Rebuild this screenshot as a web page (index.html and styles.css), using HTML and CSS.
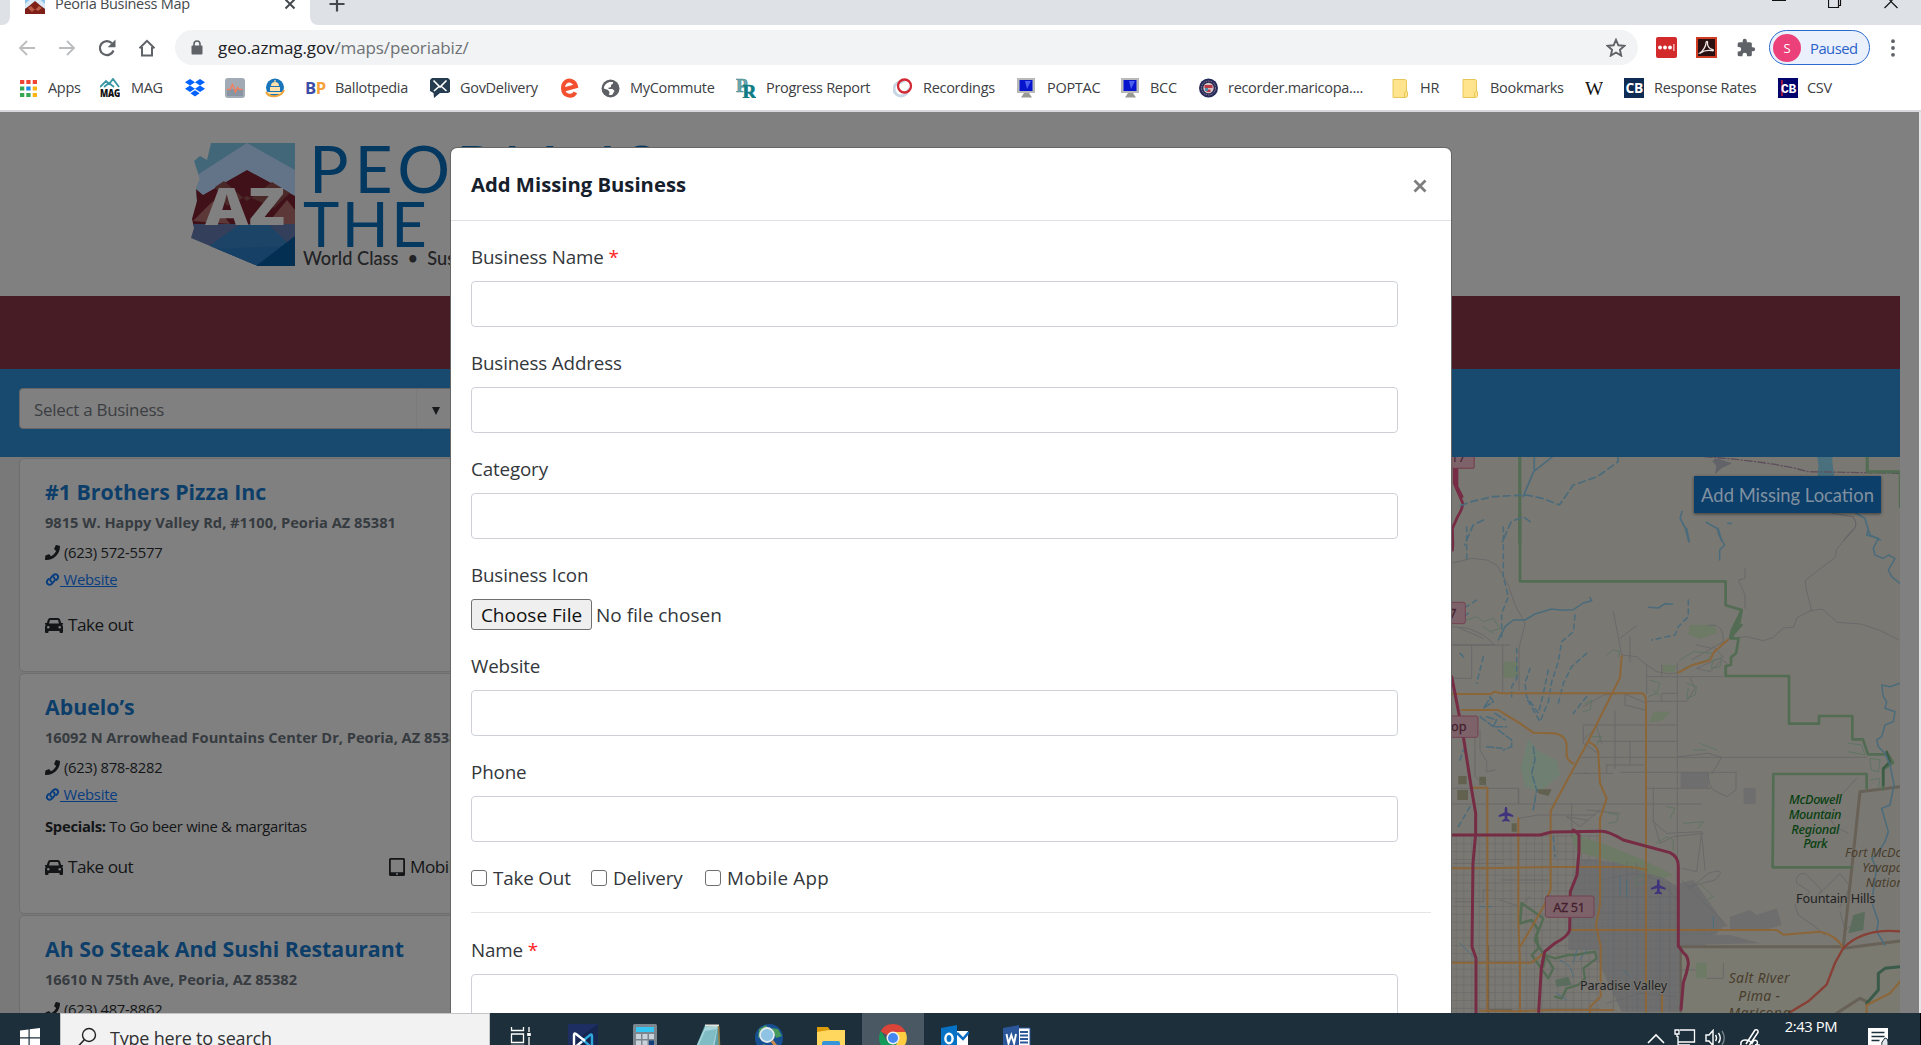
FILE: index.html
```html
<!DOCTYPE html>
<html lang="en">
<head>
<meta charset="utf-8">
<title>Peoria Business Map</title>
<link rel="stylesheet" href="styles.css">
</head>
<body>
<header class="chrome">
  <div class="tabstrip">
    <div class="prev-tab"></div>
    <div class="tab">
      <svg class="favicon" width="20" height="20" viewBox="0 0 20 20"><path fill="#8ec5ea" d="M0 0h20v20H0z"/><path fill="#dbe9f6" d="M0 10 10 1l10 9v4H0z"/><path fill="#7e2018" d="M0 15l4-3 6-5 6 5 4 3v5H0z"/><path fill="#b85c48" d="M3 14l3-2 4 4 4-4 3 2-4 3-3-2-3 3z"/></svg>
      <span class="tab-title">Peoria Business Map</span>
      <svg class="tab-close" width="12" height="12" viewBox="0 0 12 12"><path d="M1.500 1.500l9 9m0-9l-9 9" stroke="#45494d" stroke-width="2"/></svg>
    </div>
    <svg class="newtab" width="16" height="16" viewBox="0 0 16 16"><path d="M8 .5v15M.5 8h15" stroke="#45494d" stroke-width="2.200"/></svg>
    <div class="winbtns">
      <svg width="14" height="10" viewBox="0 0 14 10"><path d="M0 .5h14" stroke="#111"/></svg>
      <svg width="14" height="10" viewBox="0 0 14 10"><path d="M.5-2v9.500h10V-2M12.500-2v7.500h-2" fill="none" stroke="#111" stroke-width="1.200"/></svg>
      <svg width="14" height="10" viewBox="0 0 14 10"><path d="M.5 8L7 1.500 13.500 8M7 1.500L5-1M7 1.500L9-1" fill="none" stroke="#111" stroke-width="1.200"/></svg>
    </div>
  </div>
  <div class="toolbar">
    <div class="nav">
      <svg width="18" height="18" viewBox="0 0 18 18"><path d="M17 9H2M9 2L2 9l7 7" fill="none" stroke="#babcbe" stroke-width="1.800"/></svg>
      <svg width="18" height="18" viewBox="0 0 18 18"><path d="M1 9h15M9 2l7 7-7 7" fill="none" stroke="#babcbe" stroke-width="1.800"/></svg>
      <svg width="18" height="18" viewBox="0 0 18 18"><path d="M15.500 11.500A7 7 0 1 1 14 4.200" fill="none" stroke="#5f6368" stroke-width="2.200"/><path fill="#5f6368" d="M17.500.5v7.800H9.700z"/></svg>
      <svg width="18" height="18" viewBox="0 0 18 18"><path d="M1.500 9.200L9 1.800l7.500 7.400M4 8v8.500h10V8" fill="none" stroke="#5f6368" stroke-width="2"/></svg>
    </div>
    <div class="omnibox">
      <svg class="lock" width="12" height="15" viewBox="0 0 12 15"><path d="M3 6V4a3 3 0 0 1 6 0v2" fill="none" stroke="#5f6368" stroke-width="1.600"/><rect x=".5" y="5.500" width="11" height="9" rx="1" fill="#5f6368"/></svg>
      <span class="url">geo.azmag.gov<i>/maps/peoriabiz/</i></span>
      <svg class="star" width="20" height="19" viewBox="0 0 20 19"><path d="M10 1.800l2.400 5.500 6 .5-4.500 4 1.300 5.800L10 14.500l-5.200 3.100 1.300-5.800-4.500-4 6-.5z" fill="none" stroke="#5f6368" stroke-width="1.900"/></svg>
    </div>
    <div class="exts">
      <svg width="21" height="21" viewBox="0 0 21 21"><rect width="21" height="21" rx="2" fill="#d32b2b"/><g fill="#fff"><circle cx="4" cy="10.500" r="1.900"/><circle cx="9" cy="10.500" r="1.900"/><circle cx="14" cy="10.500" r="1.900"/><path d="M17.400 7h1v7h-1z"/></g></svg>
      <svg width="21" height="21" viewBox="0 0 21 21"><rect x="1" y="1" width="19" height="19" fill="#2a1010" stroke="#cf3a22" stroke-width="2"/><path d="M4 16c3-2 6-7 6-10 0-2 2-2 1.500 0-.5 3 2 6 5 6.500 1.500.5 1 1.500-.5 1.200C12 13 8 13.500 4.500 16z" fill="none" stroke="#efe5e5" stroke-width="1.300"/></svg>
      <svg width="20" height="20" viewBox="0 0 24 24"><path fill="#5f6368" d="M20.500 11H19V7a2 2 0 0 0-2-2h-4V3.500a2.500 2.500 0 0 0-5 0V5H4a2 2 0 0 0-2 2v3.800h1.500a2.700 2.700 0 0 1 0 5.400H2V20a2 2 0 0 0 2 2h3.800v-1.500a2.700 2.700 0 0 1 5.400 0V22H17a2 2 0 0 0 2-2v-4h1.500a2.500 2.500 0 0 0 0-5z"/></svg>
    </div>
    <div class="profile"><span class="avatar">S</span><span>Paused</span></div>
    <svg class="kebab" width="4" height="18" viewBox="0 0 4 18"><g fill="#5f6368"><circle cx="2" cy="2.200" r="1.900"/><circle cx="2" cy="9" r="1.900"/><circle cx="2" cy="15.800" r="1.900"/></g></svg>
  </div>
  <nav class="bookmarks">
    <a><svg width="17" height="17" viewBox="0 0 17 17"><path fill="#ee4535" d="M0 0h4.300v4H0zM6.300 0h4.300v4H6.300zM12.700 0H17v4h-4.300z"/><path fill="#34a853" d="M0 6.500h4.300v4H0zM0 13h4.300v4H0zM6.300 13h4.300v4H6.300z"/><path fill="#1a8be8" d="M6.300 6.500h4.300v4H6.300z"/><path fill="#fbb412" d="M12.700 6.500H17v4h-4.300zM12.700 13H17v4h-4.300z"/></svg></a><span>Apps</span>
    <a><svg width="20" height="20" viewBox="0 0 20 20"><path d="M0 9l6-6 3 3 4-5 6 8M4 9l5-4 5 4" fill="none" stroke="#3d98a6" stroke-width="1.900"/><text x="0" y="19" textLength="20" lengthAdjust="spacingAndGlyphs" font-family="Open Sans" font-weight="800" font-size="10.500" fill="#111">MAG</text></svg></a><span>MAG</span>
    <a><svg width="20" height="18" viewBox="0 0 20 18"><path fill="#0062ff" d="M5 0l5 3.200-5 3.200-5-3.200zM15 0l5 3.200-5 3.200-5-3.200zM5 6.500l5 3.200-5 3.200-5-3.200zM15 6.500l5 3.200-5 3.200-5-3.200zM10 11.200l4.600 3L10 17.500l-4.600-3.300z"/></svg></a>
    <a><svg width="20" height="20" viewBox="0 0 20 20"><rect width="20" height="20" rx="3" fill="#a2aab5"/><rect x="2" y="11" width="16" height="7" fill="#8995a2"/><path d="M2 11.500h3l2.500-5 3 7.500 2-4.500 2 2h3" fill="none" stroke="#f08060" stroke-width="1.500"/></svg></a>
    <a><svg width="20" height="20" viewBox="0 0 20 20"><circle cx="10" cy="9.500" r="9" fill="#1874bb"/><path d="M3 14h14v2H3zM5 9h10v4H5zM6 8a4 4 0 0 1 8 0zM9.400 2h1.200v3H9.400z" fill="#ffe0a8"/><path d="M1 14c3 6 15 6 18-2" fill="none" stroke="#eda43a" stroke-width="2"/></svg></a>
    <a><svg width="21" height="20" viewBox="0 0 21 20"><text y="16" textLength="21" lengthAdjust="spacingAndGlyphs" font-family="Open Sans" font-weight="700" font-size="16" fill="#3b4da5">B<tspan fill="#f6a33a">P</tspan></text></svg></a><span>Ballotpedia</span>
    <a><svg width="20" height="20" viewBox="0 0 20 20"><path fill="#253c50" d="M2 0h16l2 2v12l-2 1H10l-6 5-.5-5L0 13V2z"/><path d="M3.500 2.500L10 9l6.500-6.500M4 13l5-4.500M16.500 13l-5-4.500" stroke="#fff" stroke-width="1.600" fill="none"/></svg></a><span>GovDelivery</span>
    <a><svg width="20" height="20" viewBox="0 0 20 20"><path d="M4 11.500l12-3.300C15 3 9 1 5.500 4S2 15 7 17c4 1.500 7 0 8.500-2.500" fill="none" stroke="#f2502f" stroke-width="4"/></svg></a>
    <a><svg width="19" height="19" viewBox="0 0 19 19"><circle cx="9.500" cy="9.500" r="9" fill="#5d6165"/><path fill="#fff" d="M8.500 3C5 4 3 6.500 2.800 9.500l4.200 1.500 1.500 2-.5 3c3 .5 4-1 4-1.500l1.500-2.500-2-2H8L7 9l3-1V6l2-1.500V3z"/></svg></a><span>MyCommute</span>
    <a><svg width="20" height="20" viewBox="0 0 20 20"><g font-family="Liberation Serif" font-weight="700" font-size="19"><text x="0" y="13.500" fill="#6ba7ac" stroke="#47888e" stroke-width=".6">P</text><text x="6.500" y="19.700" fill="#0e7c85" stroke="#0e7c85" stroke-width=".7">R</text></g></svg></a><span>Progress Report</span>
    <a><svg width="20" height="20" viewBox="0 0 20 20"><circle cx="8" cy="11" r="7" fill="none" stroke="#c8d6e6" stroke-width="3"/><circle cx="11.500" cy="8" r="6.500" fill="none" stroke="#d22734" stroke-width="2.300"/><circle cx="12" cy="8" r="3.800" fill="#fff"/></svg></a><span>Recordings</span>
    <a><svg width="19" height="20" viewBox="0 0 19 20"><path fill="#b9b9b9" d="M0 0h18v15H0z"/><path fill="#0714ce" d="M2.500 2h13v11h-13z"/><path fill="#4a60ee" d="M8 3h6l-4 8z"/><path fill="#999a94" d="M7 15h5l3 4.500H4z"/></svg></a><span>POPTAC</span>
    <a><svg width="19" height="20" viewBox="0 0 19 20"><path fill="#b9b9b9" d="M0 0h18v15H0z"/><path fill="#0714ce" d="M2.500 2h13v11h-13z"/><path fill="#4a60ee" d="M8 3h6l-4 8z"/><path fill="#999a94" d="M7 15h5l3 4.500H4z"/></svg></a><span>BCC</span>
    <a><svg width="20" height="20" viewBox="0 0 20 20"><circle cx="9.500" cy="10" r="9.500" fill="#252a59"/><circle cx="9.500" cy="10" r="7" fill="none" stroke="#9e8897" stroke-width="1" stroke-dasharray="1.500 1"/><circle cx="9.500" cy="10" r="5.200" fill="#d9c5c4"/><path d="M5.500 7h8v3h-8zm2 4.500h4v2.500h-4z" fill="#bb3846"/><path d="M6 10h3v3H6z" fill="#4a8cab"/></svg></a><span>recorder.maricopa....</span>
    <a><svg width="16" height="19" viewBox="0 0 16 19"><path fill="#ffe48d" stroke="#e7c658" d="M1 .5h12q1.500 0 1.500 2V12l1 1v4q-.5 1.500-2 1.500H1z"/><path fill="none" stroke="#e7c658" d="M14.500 12q-3 1-2 6"/></svg></a><span>HR</span>
    <a><svg width="16" height="19" viewBox="0 0 16 19"><path fill="#ffe48d" stroke="#e7c658" d="M1 .5h12q1.500 0 1.500 2V12l1 1v4q-.5 1.500-2 1.500H1z"/><path fill="none" stroke="#e7c658" d="M14.500 12q-3 1-2 6"/></svg></a><span>Bookmarks</span>
    <a><svg width="18" height="18" viewBox="0 0 18 18"><text x="0" y="15.500" textLength="18" lengthAdjust="spacingAndGlyphs" font-family="Liberation Serif" font-size="19" fill="#111">W</text></svg></a>
    <a><svg width="20" height="20" viewBox="0 0 20 20"><path fill="#0f2c54" d="M0 0h20v20H0z"/><text x="1.500" y="15" textLength="17.500" lengthAdjust="spacingAndGlyphs" font-family="Open Sans" font-weight="700" font-size="14" fill="#fff">CB</text></svg></a><span>Response Rates</span>
    <a><svg width="20" height="20" viewBox="0 0 20 20"><path fill="#03036e" d="M0 0h20v20H0z"/><path d="M4 2v16" stroke="#d61f30" stroke-width="1.500"/><text x="3" y="15" textLength="15" font-family="Liberation Mono" font-weight="700" font-size="13" fill="#fff">CB</text></svg></a><span>CSV</span>
  </nav>
</header>

<main class="page">
  <div class="banner">
    <svg class="logo" width="105" height="123" viewBox="0 0 105 123">
      <defs><clipPath id="az"><path d="M20 0H104V123H67L0 95l3-10-2-9 5-18-1-12 4-10-6-18 6-5 7 4z"/></clipPath></defs>
      <g clip-path="url(#az)"><path fill="#426778" d="M0 0h104v60H0z"/><path fill="#647488" d="M0 36L56 0l48 27v32H0z"/><path fill="#401119" d="M0 42l12 10 44-25 48 26v30H0z"/><path fill="#4a2928" d="M24 44l9-6 23 20 25-19 18 11-16 15-27-12-20 10z"/><path fill="#5d3838" d="M2 78l20-20 17 23zM76 81l20-24 8 10v14z"/><path fill="#343f5b" d="M0 81h104v42H0z"/><path fill="#1b4466" d="M18 103L48 82h30l26 25v16H60z"/><path fill="#174066" d="M25 106l40 17 30-20z"/><path fill="#032f52" d="M104 93v30H65z"/></g>
      <text x="14" y="81.500" textLength="80" lengthAdjust="spacingAndGlyphs" font-family="Open Sans" font-size="52" font-weight="800" fill="#808080">AZ</text>
    </svg>
    <div class="wordmark"><b>PEORIA IS</b><b class="the">THE</b><span>World Class&nbsp; •&nbsp; Sus</span></div>
  </div>
  <div class="maroon"></div>
  <div class="searchbar"><div class="select"><span>Select a Business</span><i></i></div></div>
  <div class="content">
    <section class="list">
      <article class="card">
        <h2>#1 Brothers Pizza Inc</h2>
        <h3>9815 W. Happy Valley Rd, #1100, Peoria AZ 85381</h3>
        <p><svg class="ph" viewBox="0 0 512 512"><use href="#phone"/></svg>(623) 572-5577</p>
        <p class="web"><svg class="ph" viewBox="0 0 512 512"><use href="#link"/></svg><u>&nbsp;Website</u></p>
        <div class="services"><span><svg class="car" viewBox="0 0 18 15"><use href="#car"/></svg>Take out</span></div>
      </article>
      <article class="card tall">
        <h2>Abuelo’s</h2>
        <h3>16092 N Arrowhead Fountains Center Dr, Peoria, AZ 85382</h3>
        <p><svg class="ph" viewBox="0 0 512 512"><use href="#phone"/></svg>(623) 878-8282</p>
        <p class="web"><svg class="ph" viewBox="0 0 512 512"><use href="#link"/></svg><u>&nbsp;Website</u></p>
        <p class="specials"><b>Specials:</b> To Go beer wine &amp; margaritas</p>
        <div class="services"><span><svg class="car" viewBox="0 0 18 15"><use href="#car"/></svg>Take out</span><span><svg class="tablet" viewBox="0 0 16 18"><path fill="#131517" fill-rule="evenodd" d="M1.500 0h13Q16 0 16 1.500v15Q16 18 14.500 18h-13Q0 18 0 16.500v-15Q0 0 1.500 0zM1.800 1.800v12.400h12.400V1.800zM7 15.300v1.400h2v-1.400z"/></svg>Mobile App</span></div>
      </article>
      <article class="card">
        <h2>Ah So Steak And Sushi Restaurant</h2>
        <h3>16610 N 75th Ave, Peoria, AZ 85382</h3>
        <p><svg class="ph" viewBox="0 0 512 512"><use href="#phone"/></svg>(623) 487-8862</p>
      </article>
    </section>
    <section class="map">
      <svg width="449" height="556" viewBox="1451 457 449 556">
        <defs>
          <symbol id="phone" viewBox="0 0 512 512"><path fill="#131517" d="M493.400 24.600l-104-24c-11.300-2.600-22.900 3.300-27.500 13.900l-48 112c-4.200 9.800-1.400 21.300 6.900 28l60.600 49.600c-36 76.700-98.900 140.500-177.200 177.200l-49.600-60.600c-6.800-8.300-18.200-11.100-28-6.900l-112 48C3.900 466.600-2 478.100.600 489.400l24 104C27.100 504.200 36.700 512 48 512c256.100 0 464-207.500 464-464 0-11.200-7.700-20.900-18.600-23.400z"/></symbol>
          <symbol id="link" viewBox="0 0 512 512"><g fill="none" stroke="#083d80" stroke-width="66" stroke-linecap="round"><path d="M215 330c-45-35-50-95-10-138l85-90c90-75 205 30 135 130l-40 42"/><path d="M297 182c45 35 50 95 10 138l-85 90c-90 75-205-30-135-130l40-42"/></g></symbol>
          <symbol id="car" viewBox="0 0 18 15"><path fill="#131517" fill-rule="evenodd" d="M5 0h8q1.500 0 2 1.500L16.200 5H18v1.500h-1Q18 7.500 18 9v5q0 1-1 1h-1.500q-1 0-1-1v-1h-11v1q0 1-1 1H1q-1 0-1-1V9q0-1.500 1-2.500H0V5h1.800L3 1.500Q3.500 0 5 0zM5 2L4 5.500h10L13 2zM3.300 8A1.200 1.200 0 1 0 3.300 10.600 1.200 1.200 0 1 0 3.300 8zM14.700 8A1.200 1.200 0 1 0 14.700 10.600 1.200 1.200 0 1 0 14.700 8z"/></symbol>
          <pattern id="grid" width="47" height="47" patternUnits="userSpaceOnUse"><path d="M0 1h47M1 0v47M0 25h47M24 0v47" stroke="#66666a" stroke-width="1.800" fill="none"/></pattern>
          <pattern id="dense" width="18" height="22" patternUnits="userSpaceOnUse"><path fill="#6e6e6e" d="M0 0h18v22H0z"/><path d="M0 1h18M1 0v22" stroke="#66676a" stroke-width="1.200" fill="none"/></pattern>
          <symbol id="plane" viewBox="0 0 46 46"><path fill="#40337e" d="M23 0q4 1 4 8v9l18 9v5l-18-4v9l7 5v4l-11-2-11 2v-4l7-5v-9L1 31v-5l18-9V8q0-7 4-8z"/></symbol>
        </defs>
        <path fill="#7a7872" d="M1451 457h449v556h-449z"/>
        <g transform="translate(1440 530) scale(.33333)" fill="none" stroke-linejoin="round" stroke-linecap="round">
          <path fill="#7a7a70" d="M715 1252h500l165-20v220H715z"/>
          <path fill="#6f8072" stroke="none" d="M265 625l25 35 60 30 10 45-60 50-45-15-12-60z"/>
          <path fill="url(#grid)" d="M30 915h450v540H30z"/>
          <path fill="url(#dense)" d="M410 985l200 20 110 70 60 5 70 110-60 60h-70v195H545l-70-150V1260h-90v-80z"/>
          <path fill="#6e6e6e" d="M720 1060l40-10 100 140-145 10zM870 1160l60-20 20 15 60-20 15 50-50 15H870zM720 1215h150l90 25-240 5zM722 727h84v46h-84zM911 774h36v48h-36z"/>
          <path fill="#6c7a66" d="M190 395h44v48h-44zM390 910l110 35 110 45 90 45-30 10-150-50-110-30zM768 1298h32v46h-32zM640 545h50l-20 25-42 8zM750 285h75l5 25-50 17-35-15zM668 405h40l-5 22h-35z"/>
          <path fill="#4f6a56" opacity=".7" d="M1240 1155l35-10-5 55-45 10zM345 1350l40-10 10 25-45 5z"/>
          <path fill="#62604f" d="M55 738h25v25H55zM52 780h32v30H52zM118 740h20v25h-20zM215 880h15v25h-15zM290 778h45l-10 20-30-8z"/>
          <!-- minor roads -->
          <g stroke="#66676a" stroke-width="2.600">
            <path d="M35 100l60-15 45 5 30 15 35 60 20 60 30 55-18 75v125M35 290l50 5 45 20 35 30H35M35 345h175M188 345v140M95 345v100H35M60 295l70 30M35 775h200v45M35 822h750M120 600v60l20 35v30l25 -5M105 620v120l40 35M235 865l60-10h170M236 775v45"/>
            <path d="M520 245l15 75 10 55 45 5 30 25 30 20 35 7 35-5M540 325l50-38M570 320v75M620 405v85M712 400v845M620 440h230M665 405v35M620 514h120l25-40-15-30M665 514v-24h45M525 545v170M430 585h280M470 634h240M425 682h855M500 705h112M570 635v70M500 705v25M430 730h90M540 727h350M620 775h190M640 775v100l40 35 105-5-15 120-45-10M395 730h50"/>
            <path d="M805 730q0 35 15 50l40 20 28-20v-52M845 682l-30 50M715 680l90-10 40 12M430 590v50l45 30M430 630l40-40 15 50M430 530l60-35 60-5 70 30M555 490v35l60 15M440 840l100 10M440 870l-60-10 40 30 60-50M395 820v100"/>
            <path d="M915 115v30l-20 5 20 45v40M870 325l50-5 50 12 30-10 30-28 30-2 12-30 40-20 35-5 45 40 70 5 60 20 55 28M1115 243l-15-60-5-30 30-25 60-45 5-25 45-55"/>
            <path d="M755 390l60-35 35-20q0-60-45-48M770 345l45 10M860 430v-30l-20-15M820 350l30 30-80 35 40 10 30-30M1115 1120l30-40-50-50q-30 0-25 30l40 25-45 40 10 30 50 35 30 25M1200 1130l30-60-30-40-60 60M1200 1145l15 55 30-20M1160 830l40-30 50-55M1155 840l30 50 40 20"/>
            <path d="M725 1050l80 80 60 60M745 1080l60-50q60-20 20 20l-80 20M785 910l10 110M640 870l20 70 40-20 90-10M150 1080h-20v35H45M40 1000h150M185 1050h140M180 1110l60 20 30-30M480 1050l100-20 80 20 50 60M480 1100h230M480 1150h230M520 1000v440M560 1000v440M590 1000v440M660 1040v400M690 1060v380M720 1320h45M800 1345h50v-45M500 1420l100-30 110 10"/>
          </g>
          <path d="M145 1250v200M145 1440h70" stroke="#655f4e" stroke-width="5"/>
          <!-- reservations -->
          <path d="M720 1250h490l50-465 120-15M1210 1255l170-22M1190 1450l70-45 20 10" stroke="#686157" stroke-width="9"/>
          <path d="M722 1250v195" stroke="#655f58" stroke-width="7"/>
          <!-- park boundaries -->
          <g stroke="#536c54">
            <path d="M240-50V154h617v72l48 14-30 83" stroke-width="8"/>
            <path d="M905 240l-8 45-25 40h24l-8 45-15 12v22l-16 5v29h190v143h90v-23h100v70h32l15 45h60l15 25-30 20v60" stroke-width="8"/>
            <path d="M1280 775v-43H1000l-2 280h235" stroke-width="8"/>
            <path d="M905 240l-30 60-5 25 35-40" stroke-width="7"/>
            <path d="M245 1120l65 45-20 50 5 40-20 20 50 70 15-30-25-40 30 10 40-10 20 0 60-10 5 20-40 30 5 30-20 20-35 10-15 30-20-5" stroke-width="7"/>
            <path d="M245 1120l-5 60 35-10 20 30-10 30 30 50-5 30" stroke-width="8"/>
            <path d="M1380 1310l-45 5-20 15v50l-35 40" stroke="#3a5a4a" stroke-width="9"/>
            <path d="M1340 665l10 30-20 20v50" stroke="#3b5c44" stroke-width="7"/>
          </g>
          <g fill="none" stroke="#5f7464" stroke-width="3"><path d="M80 270l30-10 20 15 30-10 20 30-30 10M130 290l30 20M500 375l20-15 20 5-5 15M630 450l30 10-10 30-25 10M640 480l20 20M740 460l30 10-5 25-25 10 5-30M720 390l40-25 60 5-20 20-70 25M820 390l25-5-5 25-25 5zM435 520l20-10-5 30-20 5M455 620l30 0-15 25M505 850l30 5-5 20-25 5M680 830l25 5-15 30M730 880l60-5-15 20M1225 640l40 5 10 30-50-10M1290 685l30 5-5 35-20-5zM1290 750l30-5-5 30M650 940l30-20 20 10 0 30M760 660l40 0M780 640l50 20M590 1040l20-5v25l-20 5zM780 1060l40 40-20 10"/></g>
          <!-- waterways -->
          <g stroke="#4a6c7c" stroke-width="4.500">
            <path d="M175 330l20-40 25-20 35 0 30-18 50-15 30 4 35-2 30-20 25-7-5-10M625 232l30 2 20-13 22 2M740-5l8 40M832-5l5 20 17 30-15 15v30M1285 0l-5 15 35 10-15 30 5 20 25 10 15-10 20 10-20 35 10 20 25 20M1380 460l-30 10-25-5 5 35 10 15-5 20 30 10-5 30-25 10-10 35-15 10 5 20 20 20 15 35 12 60-12 60-25 10 20 70-10 30-25 40-15 10 15 30-15 100 20 60-5 30 25 40"/>
            <g stroke-dasharray="15 12"><path d="M80-10v100M190-10v150l15 60-20 50v70M405 255l-5 50-35 30-10 60-20 60-10 60-25 60-40-70M440 370l-45 40-25 50-15 60M325 420l-15 70-15 60-35-50-5-40 15-45M230 355v90l-15 25v30M60 370l15 15M60 690l10-30M110 210l-30 20M85 250l-45 30M130 380l-20 80M440 500l-40 50M745 210v50l-30 30-10 25-70 15M340 920l5 60M90 830l-35 60"/></g>
            <path d="M280 650l5 40-10 40 15 50-10 60M150 500l10 15-30 20 20-30M140 560l30 10-10 20 40 0M165 550l30 20M120 560l40 30M175 600l40 30v20l-25 10M140 650l45 5" stroke-dasharray="22 8"/>
          </g>
          <path d="M540 1040v60M560 1050v50M360 1290l30 20 10 30M410 1260l-10 40M440 1260l-20 30M350 1390l30 20M550 1320l20 20M60 1240l50 50M120 1130h40M820 1160v40" stroke="#486e84" stroke-width="3" stroke-dasharray="15 5"/>
          <!-- main roads -->
          <g stroke="#8c6638" stroke-width="6">
            <path d="M35 492h118l10-7 20 5h420q15 0 15 25v930M65 540h110l65 40 40 28 60 2q40 5 40 40v30q5 15 20 20M545 378l-5 65-95 190-113 210v235l-20 50-70 120M445 635q30 15 30 35l5 90 20 45-20 60v260l-12 60 14 65v150l-32 30v50M95 773h47v670M235 865v310l5 125v145M35 1015h100l200-4h240l45 8M390 1200h620l20 14 110-9q50 10 70 50M35 1298h240l40-30M120 1442l110 2 100-4h190M666 1395v50M715 428l40-22 55-15 12-25 42-37M1380 1355l-30 35-40 20-30 15v25"/>
          </g>
          <path d="M1380 1204q-110-10-170 50l-25 45-25 65-55 50-55 33" stroke="#883f35" stroke-width="7"/>
          <!-- freeways -->
          <g stroke="#762c44" stroke-width="9">
            <path d="M35 0q5 30 2 60M35 440l10 50 25 130 25 160 12 70v60l-8 90-3 250 12 35v170M35 915h265l35-9 150-2q20 0 65 26l140 38q25 12 25 40v240l15 20q15 10 15 35-5 30-15 55l-7 80M400 900l17 15v50l-6 70-20 50-2 115q-5 20-45 40l-30 25-10 50-8 130"/>
          </g>
          <use href="#plane" x="175" y="830" width="46" height="46"/><use href="#plane" x="632" y="1048" width="46" height="46"/>
          <g fill="#7e626a" stroke="#733b4d" stroke-width="2.500"><rect x="-10" y="217" width="86" height="64" rx="6"/><rect x="-30" y="558" width="144" height="64" rx="6"/><rect x="316" y="1098" width="146" height="64" rx="6"/></g>
          <g font-family="Noto Sans" stroke="none" font-size="38">
            <g fill="#43202d" stroke="#43202d" stroke-width=".8"><text x="28" y="263">7</text><text x="33" y="603">op</text><text x="340" y="1145" textLength="95">AZ 51</text></g>
            <g fill="#094012" font-style="italic" font-weight="500" text-anchor="middle"><text x="1126" y="821" textLength="158">McDowell</text><text x="1125" y="866" textLength="158">Mountain</text><text x="1126" y="911" textLength="144">Regional</text><text x="1126" y="955" textLength="73">Park</text></g>
            <g fill="#493d2d" font-style="italic"><text x="1215" y="980">Fort McDowell</text><text x="1267" y="1025">Yavapai</text><text x="1277" y="1070">Nation</text></g>
            <g fill="#493d2d" font-style="italic" font-size="42"><text x="866" y="1358" textLength="183">Salt River</text><text x="895" y="1412" textLength="125">Pima -</text><text x="865" y="1463" textLength="186">Maricopa</text></g>
            <g fill="#212224" stroke="#7a7872" stroke-width="5" paint-order="stroke"><text x="1068" y="1118" textLength="238">Fountain Hills</text><text x="420" y="1380" textLength="262">Paradise Valley</text></g>
          </g>
        </g>
        <g transform="translate(1380 110) scale(.34506 .33333)" fill="none" stroke-linecap="round">
          <path fill="#626269" d="M975 1045l45 15-30 15-20 18 5-25-12-15z"/><path fill="#4a6f7d" d="M1267 1038h44v20l5 40h-48l3-30z"/>
          <path d="M940 1040q200 15 300 45l270 5" stroke="#5d4f5c" stroke-width="4" stroke-dasharray="22 7 3 7"/>
          <path d="M405 1040v260M1412 1035v50h100M1508 1090v100" stroke="#536c54" stroke-width="9"/>
          <path d="M215 1070v50l25 60q0 15-15 40l-15 35v50M223 1075v55l15 30" stroke="#762c44" stroke-width="8"/>
          <g stroke="#4a6c7c" stroke-width="5"><path d="M500 1040l-55 45-30 75M447 1040v40M875 1205l-5 20 15 30 10 40M945 1237l35 20 10 35M1380 1210l25 15 15 50 30 15"/><path d="M690 1040v15l-60 45-70 25-40 60-50-20-45-10-100 5-60 15-40 15M300 1230l-30 15-25 60M435 1235l-20-15-35 15-25 60M1008 1240h10" stroke-dasharray="20 12"/></g>
          <path d="M1310 1210l60 10q15 20 5 35l-30 35" stroke="#626368" stroke-width="3"/>
          <rect x="190" y="1020" width="83" height="55" rx="5" fill="#7e626a" stroke="#733b4d" stroke-width="3"/><text x="206" y="1056" font-family="Noto Sans" font-size="36" fill="#43202d">17</text>
        </g>
      </svg>
      <div class="addbtn">Add Missing Location</div>
    </section>
  </div>
  <div class="edge"></div>

  <section class="modal">
    <div class="modal-head"><h1>Add Missing Business</h1><svg width="14" height="14" viewBox="0 0 14 14"><path d="M1.500 1.500l11 11m0-11l-11 11" stroke="#7d7d7d" stroke-width="2.800"/></svg></div>
    <div class="modal-body">
      <label>Business Name <em>*</em></label><div class="input"></div>
      <label>Business Address</label><div class="input"></div>
      <label>Category</label><div class="input"></div>
      <label>Business Icon</label><div class="file"><span class="filebtn">Choose File</span><span>No file chosen</span></div>
      <label>Website</label><div class="input"></div>
      <label>Phone</label><div class="input"></div>
      <div class="checks"><i></i><span>Take Out</span><i></i><span>Delivery</span><i></i><span>Mobile App</span></div>
      <hr>
      <label>Name <em>*</em></label><div class="input"></div>
    </div>
  </section>
</main>

<footer class="taskbar">
  <div class="start"><svg width="20" height="20" viewBox="0 0 20 20"><path fill="#fff" d="M0 2.600L8.500 1.500V9.300H0zM9.700 1.300L20 0v9.300H9.700zM0 10.500h8.500v8L0 17.400zM9.700 10.500H20V20L9.700 18.600z"/></svg></div>
  <div class="search"><svg width="20" height="22" viewBox="0 0 20 22"><circle cx="12" cy="8" r="6.500" fill="none" stroke="#222" stroke-width="1.400"/><path d="M7.500 12.500L1 19.500" stroke="#222" stroke-width="1.600"/></svg><span>Type here to search</span></div>
  <div class="apps">
    <div><svg width="22" height="22" viewBox="0 0 22 22"><g fill="none" stroke="#fff" stroke-width="1.300"><path d="M1.500 0v3.500h12V0M1.500 7h12v8.500h-12zM1.500 22v-3.500h12V22M19 0v5M19 10v12"/></g><path fill="#fff" d="M17.200 6h3.600v3h-3.600z"/></svg></div>
    <div class="up"><svg width="30" height="30" viewBox="0 0 30 30"><path fill="#16264f" d="M0 0h30v30H0z"/><path fill="#1d2f62" d="M0 0h30L0 22z"/><path d="M14 17.500l8-6.500q2-1.500 2 1v9q0 2-2 1l-7-6" fill="none" stroke="#2da7dc" stroke-width="2.400"/><path d="M17 17L8 10q-2-1.500-2 1v10q0 2.500 2 1.500l6-5" fill="none" stroke="#fff" stroke-width="2.400"/></svg></div>
    <div class="up"><svg width="24" height="30" viewBox="0 0 24 30"><rect width="24" height="30" rx="1.500" fill="#7b868e"/><path fill="#35c5f3" d="M3 3h18v5H3z"/><path fill="#c9d2d9" d="M3 10h5v5H3zM9.500 10h5v5h-5zM16 10h5v5h-5zM3 16.500h5v5H3zM9.500 16.500h5v5h-5z"/><path fill="#12407c" d="M16 16.500h5v10h-5z"/></svg></div>
    <div class="up"><svg width="28" height="30" viewBox="0 0 28 30"><path fill="#5b9ea5" d="M12 1h14l1 29H0z"/><path fill="#a9d5dc" d="M12 3l13-1-5 28H0z"/><path fill="#7fbcc4" d="M12 7l12-2-5 20H4z"/><path stroke="#e3e5df" stroke-width="2" d="M12 1.500h14"/><path stroke="#9b7b3f" stroke-width="1.500" d="M25.500 2l1.500 28"/></svg></div>
    <div class="up"><svg width="28" height="30" viewBox="0 0 28 30"><circle cx="14" cy="14" r="14" fill="#174f93"/><path fill="#45995a" d="M4 5l7-4 3 4-6 6-5 3zM17 4l6 1 4 7-6 2zM8 20l7 2-1 6-6-2z"/><circle cx="12" cy="11" r="7" fill="#8fc3e3" stroke="#e0e8eb" stroke-width="1.800"/><path d="M17 17l8 10" stroke="#c88b4d" stroke-width="3"/></svg></div>
    <div><svg width="28" height="26" viewBox="0 0 28 26"><path fill="#dc9c0a" d="M0 0h11l2 3v4H0z"/><path fill="#ffd65e" d="M0 5l12-2h16v23H0z"/><path fill="#3593d9" d="M5 26V16q0-2 2-2h14q2 0 2 2v10h-6v-5h-6v5z"/></svg></div>
    <div class="active up"><svg width="28" height="28" viewBox="0 0 28 28"><path fill="#dc4437" d="M14 14L1.500 7.500A14 14 0 0 1 26.500 8z"/><path fill="#ffcd42" d="M14 8h12.500A14 14 0 0 1 13 28l6-11z"/><path fill="#159b59" d="M1.900 7A14 14 0 0 0 13 28l5-9-10-2z"/><circle cx="14" cy="14" r="6.500" fill="#f1f1f1"/><circle cx="14" cy="14" r="5" fill="#4688f1"/></svg></div>
    <div class="mid"><svg width="28" height="28" viewBox="0 0 28 28"><path fill="#fff" d="M15 6h12v18H15z"/><path d="M16 8l6 6 6-7" fill="none" stroke="#0a6cc1" stroke-width="2.500"/><path fill="#0672c6" d="M0 3l16-3v28L0 25z"/><ellipse cx="8" cy="13.500" rx="3.600" ry="4.800" fill="none" stroke="#fff" stroke-width="2.400"/></svg></div>
    <div class="mid"><svg width="28" height="28" viewBox="0 0 28 28"><path fill="#fff" stroke="#2b579a" d="M14 3h13v22H14z"/><path d="M17 7h8M17 10.500h8M17 14h8M17 17.500h8" stroke="#2b579a" stroke-width="1.800"/><path fill="#2b579a" d="M0 3l16-3v28L0 25z"/><path d="M3.500 9l2 9.500L8.300 10l2.800 8.500L13 9" fill="none" stroke="#fff" stroke-width="1.900"/></svg></div>
  </div>
  <div class="tray">
    <svg width="18" height="11" viewBox="0 0 18 11"><path d="M1 10l8-8 8 8" fill="none" stroke="#fff" stroke-width="1.600"/></svg>
    <svg width="22" height="18" viewBox="0 0 22 18"><g fill="none" stroke="#fff" stroke-width="1.300"><path d="M6 1h14.500v12H4V7M4 13v3h12M1 1h4v4H1zM3 5v3"/></g></svg>
    <svg width="22" height="18" viewBox="0 0 22 18"><g fill="none" stroke="#fff" stroke-width="1.400"><path d="M1 6h3l4-4.500v15L4 12H1zM10.500 6q2 3 0 6M13.500 4q3.500 5 0 10"/><path d="M17 2q4.500 7 0 14" stroke="#728089"/></g></svg>
    <svg width="22" height="22" viewBox="0 0 22 22"><path d="M6 16L15 2q3.500-1 3 2.500L9.500 17M1 18q-1-6 4-6 5 0 7 3.500 2-5 5-2.500 1.500 3-2 4h5" fill="none" stroke="#fff" stroke-width="1.500"/></svg>
  </div>
  <div class="clock"><span>2:43 PM</span><span>7/2/2020</span></div>
  <svg class="note" width="21" height="20" viewBox="0 0 21 20"><path fill="#fff" d="M0 0h20v20H0z"/><path d="M3.500 4.500h13M3.500 8.500h13M3.500 12.500h8" stroke="#1d2f3b" stroke-width="1.500"/><path d="M15 18q-2-1-1-4l3-4q3 0 3 4v6" fill="#dfe5e8" stroke="#1d2f3b"/></svg>
</footer>
</body>
</html>
```
FILE: styles.css
```css
* { box-sizing: border-box; }
body { margin: 0; width: 1921px; height: 1045px; overflow: hidden; font-family: "Open Sans", "Noto Sans", sans-serif; display: flex; flex-direction: column; background: #fff; }
svg { display: block; flex: none; }
h1, h2, h3, p { margin: 0; white-space: nowrap; }

/* browser frame */
.chrome { height: 112px; border-bottom: 2px solid #d8d9df; background: #fff; flex: none; }
.tabstrip { height: 25px; background: #fff; display: flex; overflow: hidden; position: relative; }
.prev-tab { width: 10px; background: #dee1e6; border-bottom-right-radius: 8px; }
.tab { width: 300px; display: flex; padding-left: 15px; position: relative; }
.favicon { margin-top: -6px; }
.tab-title { margin-left: 10px; font-size: 14.500px; line-height: 20px; margin-top: -6px; color: #45494d; width: 136px; white-space: nowrap; letter-spacing: -.3px; }
.tab-close { margin: -2px 0 0 93px; }
.newtab { position: relative; z-index: 1; margin: -4px 0 0 19px; }
.tabstrip .winbtns { margin-left: auto; display: flex; gap: 42px; padding-right: 23px; position: relative; z-index: 1; }
.tab::after { content: ""; position: absolute; left: 300px; top: 0; width: 1611px; height: 25px; background: #dee1e6; border-bottom-left-radius: 8px; border-right: 1px solid #2b5f9b; }
.toolbar { height: 45px; display: flex; align-items: center; }
.nav { display: flex; gap: 22px; padding-left: 18px; width: 175px; }
.omnibox { width: 1463px; height: 35px; border-radius: 18px; background: #f1f3f4; display: flex; align-items: center; padding: 0 12px 0 16px; }
.url { margin-left: 15px; font-size: 17px; line-height: 24px; color: #202124; letter-spacing: -.1px; }
.url i { font-style: normal; color: #6d7175; }
.star { margin-left: auto; }
.exts { display: flex; gap: 19px; align-items: center; margin-left: 18px; }
.profile { margin-left: 13px; width: 101px; height: 35px; border: 1.500px solid #2a6bcf; border-radius: 18px; background: #eaf1fc; display: flex; align-items: center; font-size: 14.800px; color: #2a62c8; letter-spacing: -.5px; padding-left: 3px; gap: 9px; }
.avatar { width: 28px; height: 28px; border-radius: 50%; background: #ec407a; color: #fff; font-size: 13px; line-height: 28px; text-align: center; letter-spacing: 0; }
.kebab { margin-left: 21px; }
.bookmarks { height: 36px; padding-left: 20px; display: grid; align-items: center; font-size: 14.500px; line-height: 20px; color: #3c4043; letter-spacing: -.3px; white-space: nowrap;
  grid-template-columns: 28px 52px 31px 54px 40px 40px 40px 30px 95px 30px 100px 41px 29px 106px 30px 127px 30px 94px 30px 74px 29px 49px 29px 164px 28px 42px 28px 95px 39px 30px 124px 29px 60px; }
.bookmarks span { padding-bottom: 1px; }

/* page behind the dialog */
.page { position: relative; height: 901px; overflow: hidden; background: #808080; flex: none; }
.banner { height: 184px; padding: 31px 0 0 191px; display: flex; }
.wordmark { display: flex; flex-direction: column; margin-left: 7px; font-family: Lato, sans-serif; white-space: nowrap; color: #033860; }
.wordmark b { font-weight: 400; font-size: 66px; line-height: 50px; height: 51px; margin-left: 6px; letter-spacing: 5.800px; }
.wordmark .the { font-size: 61.500px; margin-left: 0; line-height: 59px; height: 54px; letter-spacing: 2.500px; }
.wordmark span { font-size: 18.200px; line-height: 20px; color: #222325; font-weight: 500; }
.maroon { width: 1900px; height: 73px; background: #471c24; }
.searchbar { width: 1900px; height: 88px; background: #184a70; padding: 19px; }
.select { width: 436px; height: 41px; border: 1px solid #666; border-radius: 4px; background: #808080; display: flex; justify-content: space-between; align-items: center; padding-left: 14px; font-size: 16.900px; color: #3b3e42; letter-spacing: -.25px; }
.select span { padding-top: 2px; }
.select i { width: 38px; height: 39px; border-left: 1px solid #7b7b7b; display: flex; align-items: center; }
.select i::after { content: ""; border: 4.500px solid transparent; border-top: 8px solid #17191b; border-bottom: 0; margin: 4px 0 0 15px; }
.content { height: 556px; display: flex; justify-content: space-between; width: 1900px; }
.list { width: 640px; padding: 1px 0 0 19px; background: #797979; display: flex; flex-direction: column; gap: 1px; }
.card { height: 214px; flex: none; border: 1px solid #6e6e6e; border-radius: 5px; background: #808080; padding: 18px 0 0 25px; color: #131517; }
.card.tall { height: 241px; }
.card h2 { font-size: 21.300px; line-height: 30px; color: #0c3e69; font-weight: 700; }
.card h3 { font-size: 14.650px; line-height: 20px; margin: 5px 0 7px; color: #363b40; font-weight: 700; }
.card p { font-size: 14.800px; line-height: 27px; display: flex; align-items: center; letter-spacing: -.25px; }
.ph { width: 15px; height: 15px; margin-right: 4px; }
.web { color: #083d80; }
.web .ph { margin-right: 0; }
.card .specials { margin-top: 5px; height: 26px; white-space: pre; letter-spacing: -.29px; }
.services { display: flex; margin-top: 19px; font-size: 17.200px; line-height: 26px; letter-spacing: -.5px; }
.tall .services { margin-top: 15px; }
.services span { width: 344px; flex: none; display: flex; align-items: center; gap: 5px; }
.car { width: 18px; height: 15px; }
.tablet { width: 16px; height: 18px; }
.map { position: relative; width: 449px; height: 556px; overflow: hidden; }
.addbtn { position: absolute; left: 243px; top: 19px; width: 187px; height: 37px; background: #0d3f6b; box-shadow: 0 1px 3px rgba(0,0,0,.5); color: #8091a0; font: 18.400px/38px Lato, sans-serif; text-align: center; }
.edge { position: absolute; right: 0; top: 0; width: 2px; height: 901px; background: #e4e5e8; }

/* dialog */
.modal { position: absolute; left: 451px; top: 36px; width: 1000px; height: 900px; background: #fff; border-radius: 6px 6px 0 0; box-shadow: 0 0 0 1px #666; }
.modal-head { height: 73px; border-bottom: 1px solid #dee2e6; display: flex; align-items: center; justify-content: space-between; padding: 0 24px 0 20px; }
.modal-head h1 { font-size: 20.250px; line-height: 28px; color: #16202c; font-weight: 700; margin-bottom: 1px; }
.modal-head svg { margin-top: 4px; }
.modal-body { padding: 23px 20px 0; font-size: 18.800px; line-height: 26px; color: #33373b; letter-spacing: -.15px; }
.modal-body label { display: block; height: 37px; }
.modal-body em { color: #f22; font-style: normal; }
.input { width: 927px; height: 46px; border: 1px solid #ced2d8; border-radius: 4px; margin-bottom: 23px; }
.file { height: 31px; display: flex; align-items: center; gap: 4px; margin-bottom: 23px; font-size: 19px; letter-spacing: 0; }
.file span { padding-top: 1px; }
.filebtn { width: 121px; height: 31px; border: 1px solid #707070; border-radius: 3px; background: #efefef; color: #111; text-align: center; line-height: 29px; }
.checks { display: grid; grid-template-columns: 22px 98px 22px 92px 22px 115px; align-items: center; }
.checks span:last-child { letter-spacing: .25px; }
.checks i { width: 16px; height: 16px; border: 1px solid #6f6f6f; border-radius: 3px; }
.modal-body hr { border: 0; height: 1px; background: #e5e5e5; margin: 21px 0 24px; }

/* desktop taskbar */
.taskbar { height: 32px; background: #1d2f3b; display: flex; overflow: hidden; border-right: 1px solid #000; flex: none; }
.start { width: 60px; padding: 15px 20px 0; }
.search { width: 430px; background: #f2f2f2; border: solid #c3c5c6; border-width: 1px 1px 0; display: flex; padding-left: 16px; height: 32px; }
.search svg { margin-top: 13px; }
.search span { margin: 10px 0 0 13px; font-size: 18px; line-height: 28px; color: #2f3133; white-space: nowrap; letter-spacing: -.2px; }
.apps { display: flex; }
.apps div { width: 62px; height: 32px; overflow: hidden; display: flex; justify-content: center; padding-top: 14px; }
.apps .up { padding-top: 11px; }
.apps .mid { padding-top: 12px; }
.apps .active { background: #495862; }
.tray { margin-left: auto; display: flex; gap: 9px; padding-top: 16px; }
.tray svg:first-child { margin-top: 4px; }
.tray svg:last-child { margin: -1px 0 0 4px; }
.clock { width: 58px; margin: 3px 0 0 20px; display: flex; flex-direction: column; align-items: center; font-size: 14.800px; line-height: 20px; color: #fff; letter-spacing: -.4px; white-space: nowrap; }
.clock span + span { margin-top: 3px; }
.note { margin: 15px 31px 0 28px; }
```
